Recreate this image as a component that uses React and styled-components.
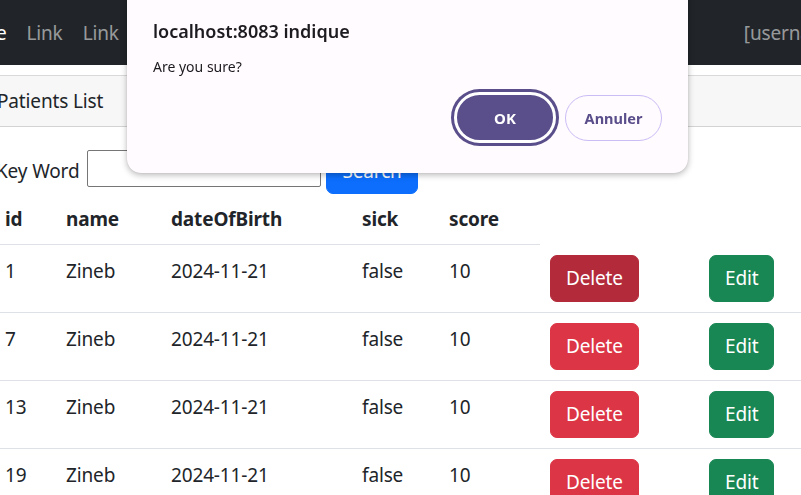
import React from "react";
import styled, { createGlobalStyle } from "styled-components";

const Global = createGlobalStyle`
  html, body {
    margin: 0;
    padding: 0;
    overflow: hidden;
    background: #ffffff;
    font-family: "Noto Sans", "Open Sans", sans-serif;
    color: #212529;
  }
`;

const Page = styled.div`
  width: 1100px;
  margin-left: ${p => p.shift}px;
  font-size: 19px;
  letter-spacing: -0.15px;
`;

const Navbar = styled.nav`
  height: 65px;
  background: #212529;
  display: flex;
  align-items: center;
`;

const NavLink = styled.a`
  font-size: 19px;
  padding: 0 10px;
  text-decoration: none;
  color: ${p => (p.active ? "#ffffff" : "rgba(255,255,255,0.55)")};
  margin-left: ${p => p.push || 0}px;
`;

const Spacer = styled.div`
  height: 10px;
`;

const Card = styled.section`
  border-top: 1px solid #d9d9d9;
`;

const CardHeader = styled.div`
  background: #f7f7f7;
  border-bottom: 1px solid #d3d3d3;
  padding: 10px 20px 10px 22px;
  line-height: 30px;
`;

const CardBody = styled.div`
  padding: 20px;
`;

const SearchForm = styled.form`
  display: flex;
  align-items: center;
`;

const Label = styled.label`
  margin-right: 8px;
  padding-left: 1px;
`;

const Input = styled.input`
  width: 234px;
  height: 37px;
  box-sizing: border-box;
  border: 1px solid #767676;
  border-radius: 2px;
  margin: -4px 5px 0 0;
`;

const Button = styled.button`
  font-family: inherit;
  font-size: 19px;
  letter-spacing: -0.15px;
  line-height: 30px;
  padding: 7.5px 15px;
  border: 1px solid ${p => p.bg};
  background: ${p => p.bg};
  color: #ffffff;
  border-radius: 7px;
  cursor: pointer;
`;

const Table = styled.table`
  border-collapse: collapse;
  line-height: 30px;
  width: 840px;
`;

const Th = styled.th`
  text-align: left;
  font-weight: 700;
  padding: 10px 10px;
  border-bottom: 1px solid #dee2e6;
  width: ${p => p.w}px;
`;

const Tr = styled.tr`
  border-bottom: 1px solid #dee2e6;
`;

const Td = styled.td`
  padding: 10px 10px;
  vertical-align: top;
  padding-top: ${p => (p.text ? 11 : 10)}px;
`;

const Overlay = styled.div`
  position: fixed;
  left: 127px;
  top: -20px;
  width: 561px;
  height: 193px;
  box-sizing: border-box;
  background: #fffbfe;
  border-radius: 14px;
  box-shadow: 0 2px 6px rgba(0, 0, 0, 0.28), 0 0 1px rgba(0, 0, 0, 0.2);
  padding: 41px 26px 0 26px;
  font-family: "Noto Sans", "Open Sans", sans-serif;
  display: flex;
  flex-direction: column;
`;

const DialogTitle = styled.div`
  font-size: 18px;
  font-weight: 600;
  color: #1d1b20;
  line-height: 24px;
  margin-top: -2px;
`;

const DialogText = styled.div`
  margin-top: 14px;
  font-size: 14px;
  color: #1d1b20;
`;

const DialogActions = styled.div`
  display: flex;
  justify-content: flex-end;
  align-items: center;
  gap: 6px;
  margin-top: 16px;
`;

const OkButton = styled.button`
  width: 102px;
  height: 51px;
  border-radius: 26px;
  background: #5a4e8b;
  border: 3px solid #ffffff;
  box-shadow: 0 0 0 3px #5a4e8b;
  box-sizing: border-box;
  color: #ffffff;
  font-family: inherit;
  font-weight: 700;
  font-size: 15px;
  margin-right: 3px;
`;

const CancelButton = styled.button`
  width: 97px;
  height: 46px;
  border-radius: 23px;
  background: transparent;
  border: 1px solid #cbbcf6;
  color: #5a4e8b;
  font-family: inherit;
  font-weight: 700;
  font-size: 14.5px;
`;

const patients = [1, 7, 13, 19];

export default function App() {
  return (
    <>
      <Global />
      <Page shift={-25}>
        <Navbar>
          <NavLink active push={-32}>Home</NavLink>
          <NavLink>Link</NavLink>
          <NavLink>Link</NavLink>
          <NavLink push={605}>[username]</NavLink>
        </Navbar>
        <Spacer />
        <Card>
          <CardHeader>Patients List</CardHeader>
          <CardBody>
            <SearchForm onSubmit={e => e.preventDefault()}>
              <Label>Key Word</Label>
              <Input />
              <Button bg="#0d6efd">Search</Button>
            </SearchForm>
            <Table>
              <thead>
                <tr>
                  <Th w={41}>id</Th>
                  <Th w={85}>name</Th>
                  <Th w={171}>dateOfBirth</Th>
                  <Th w={67}>sick</Th>
                  <Th w={81}>score</Th>
                </tr>
              </thead>
              <tbody>
                {patients.map((id, i) => (
                  <Tr key={id}>
                    <Td text>{id}</Td>
                    <Td text>Zineb</Td>
                    <Td text>2024-11-21</Td>
                    <Td text>false</Td>
                    <Td text>10</Td>
                    <Td style={{ width: 139 }}>
                      <Button bg={i === 0 ? "#b32b3a" : "#dc3545"}>Delete</Button>
                    </Td>
                    <Td>
                      <Button bg="#198754">Edit</Button>
                    </Td>
                  </Tr>
                ))}
              </tbody>
            </Table>
          </CardBody>
        </Card>
      </Page>
      <Overlay>
        <DialogTitle>localhost:8083 indique</DialogTitle>
        <DialogText>Are you sure?</DialogText>
        <DialogActions>
          <OkButton>OK</OkButton>
          <CancelButton>Annuler</CancelButton>
        </DialogActions>
      </Overlay>
    </>
  );
}
